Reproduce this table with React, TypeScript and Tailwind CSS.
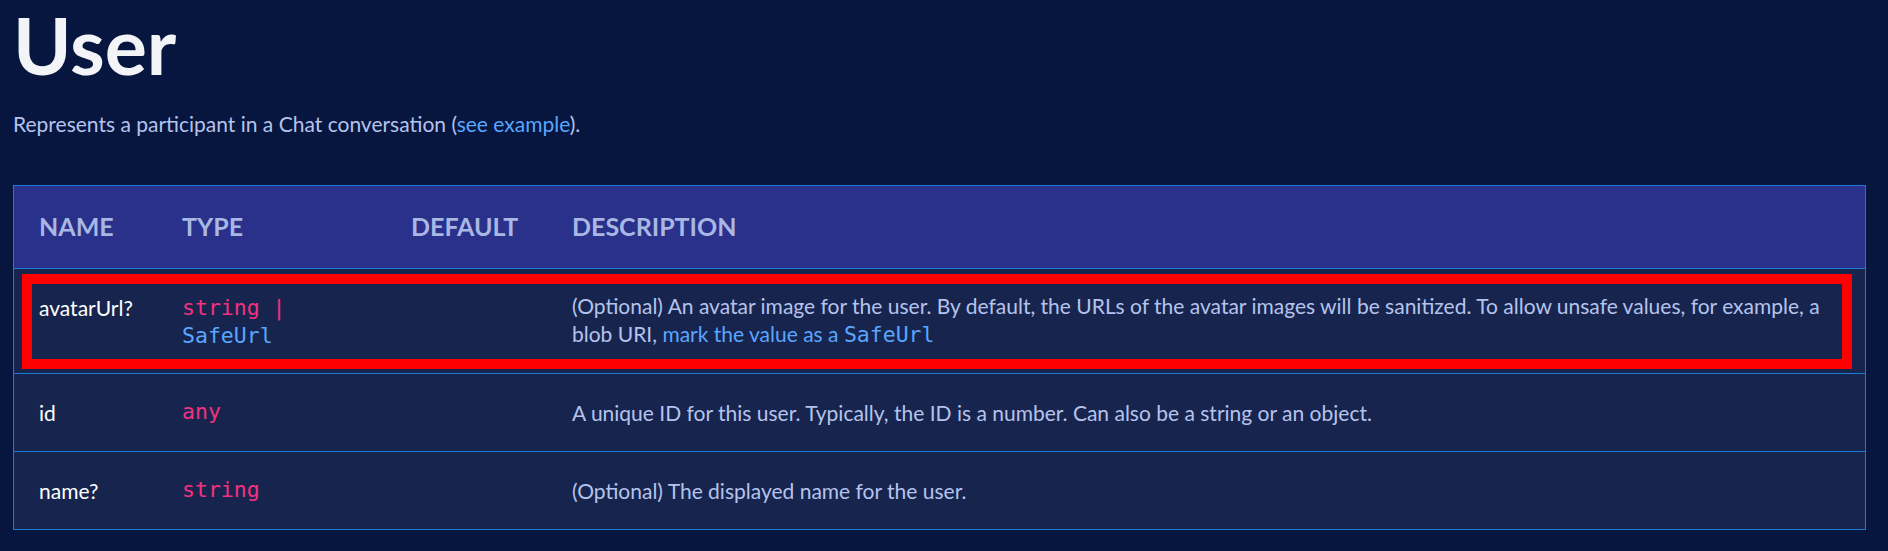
const rows = [
    { name: "id", type: "any", desc: "A unique ID for this user. Typically, the ID is a number. Can also be a string or an object." },
    { name: "name?", type: "string", desc: "(Optional) The displayed name for the user." },
]

const App = () => {
    return (
        <div className="min-h-screen bg-[#07163f] px-[13px] pt-[1px] font-['Lato',sans-serif]">

            {/* title */}
            <h1 className="text-[79px] font-bold leading-[88px] text-[#f3f4f8]">User</h1>

            <p className="mt-[21px] text-[21px] leading-[28px] text-[#b5c3ec]">
                Represents a participant in a Chat conversation (<a className="text-[#5aa6ff]">see example</a>).
            </p>

            {/* props table */}
            <div className="mt-[47px] w-[1853px] border border-[#1c7cd5] bg-[#17254e]">

                <div className="grid h-[82px] grid-cols-[168px_229px_161px_1fr] items-center bg-[#29318a] text-[25px] font-bold text-[#a9b7e4]">
                    <div className="pl-[25px]">NAME</div>
                    <div>TYPE</div>
                    <div>DEFAULT</div>
                    <div>DESCRIPTION</div>
                </div>

                {/* highlighted row */}
                <div className="relative grid h-[105px] grid-cols-[168px_229px_161px_1fr] items-center border-t border-[#1c7cd5] text-[21px] leading-[28px]">
                    <div className="self-start pl-[25px] pt-[25px] text-white">avatarUrl?</div>
                    <div className="self-start pt-[25px] font-['DejaVu_Sans_Mono',monospace] text-[21.5px] leading-[28px]">
                        <span className="text-[#f5307f]">string |</span>
                        <br />
                        <span className="text-[#5aa6ff]">SafeUrl</span>
                    </div>
                    <div></div>
                    <div className="self-start pt-[23px] text-[#b5c3ec]">
                        (Optional) An avatar image for the user. By default, the URLs of the avatar images will be sanitized. To allow unsafe values, for example, a
                        <br />
                        blob URI, <a className="text-[#5aa6ff]">mark the value as a <code className="font-['DejaVu_Sans_Mono',monospace] text-[21.5px]">SafeUrl</code></a>
                    </div>

                    <div className="pointer-events-none absolute top-[5px] right-[13px] bottom-[4px] left-[8px] border-[10px] border-[#ff0000]"></div>
                </div>

                {rows.map((row) => (
                    <div key={row.name} className="grid h-[78px] grid-cols-[168px_229px_161px_1fr] items-center border-t border-[#1c7cd5] text-[21px]">
                        <div className="pl-[25px] text-white">{row.name}</div>
                        <div className="font-['DejaVu_Sans_Mono',monospace] text-[21.5px] text-[#f5307f]">{row.type}</div>
                        <div></div>
                        <div className="text-[#b5c3ec]">{row.desc}</div>
                    </div>
                ))}
            </div>

        </div>
    )
}

export default App
